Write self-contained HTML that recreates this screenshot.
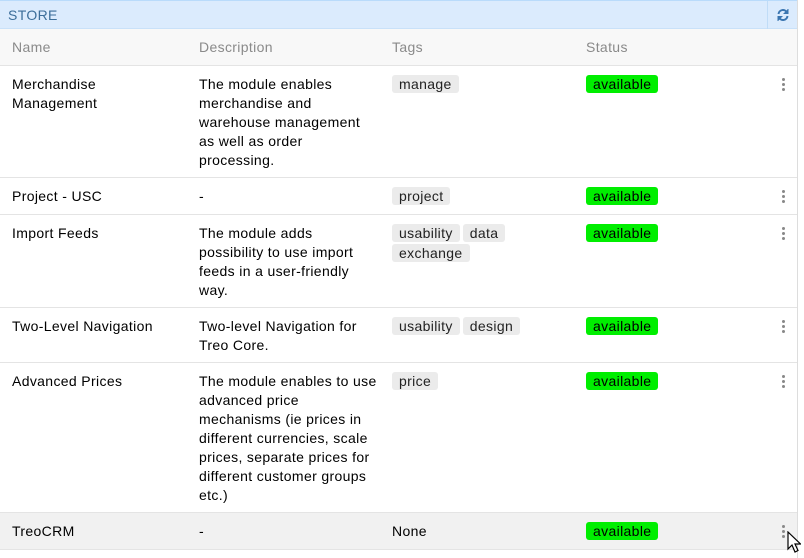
<!DOCTYPE html>
<html><head><meta charset="utf-8"><style>
*{margin:0;padding:0;box-sizing:border-box}
body{width:804px;height:558px;background:#fff;font-family:"Liberation Sans",sans-serif;font-size:14px;letter-spacing:0.35px;color:#000;position:relative;overflow:hidden}
.panel{position:absolute;left:0;top:0;width:798px;height:558px;border-right:1px solid #ddd}
.hdr{position:absolute;left:0;top:0;width:797px;height:29px;background:#dbebfd;border-top:1px solid #b9dbfb;border-bottom:1px solid #c9e1f9}
.hdr span{position:absolute;left:8px;top:6px;color:#3c6e9a;font-size:14px}
.rf{position:absolute;right:0;top:0;width:30px;height:28px;border-left:1px solid #c0dcf7;display:flex;align-items:center;justify-content:center}
.th{position:absolute;left:0;top:29px;width:797px;height:37px;background:#f8f8f8;border-bottom:1px solid #e4e4e4;color:#8a8a8a}
.th span,.row span{position:absolute}
.row{position:absolute;left:0;width:797px;border-bottom:1px solid #e4e4e4;line-height:19px}
.c1{left:12px;top:9px;width:150px}.c2{left:199px;top:9px;width:178px}.c3{left:392px;top:9px;width:180px}.c4{left:586px;top:9px}
.tag{display:inline-block;background:#ebebeb;border-radius:3px;padding:0 7px;line-height:18px;margin:0 3px 2px 0;color:#222;font-weight:normal}
.av{background:#00ee00;border-radius:3px;padding:0 7px;line-height:18px;display:inline-block;font-weight:normal}
.dots{position:absolute;left:782px;top:12px;width:3px}
.dots i{display:block;width:3px;height:3px;border-radius:50%;background:#888;margin-bottom:2px}
</style></head><body>
<div class="panel">
<div class="hdr"><span>STORE</span><div class="rf"><svg width="14" height="14" viewBox="0 0 14 14" fill="none" stroke="#3a75b0" stroke-width="2"><path d="M2.5 6A4.5 4.5 0 0 1 11 4.5"/><path d="M11.5 8A4.5 4.5 0 0 1 3 9.5"/><path d="M12 1v4.5H7.5" fill="#3a75b0" stroke-width="1"/><path d="M2 13V8.5h4.5" fill="#3a75b0" stroke-width="1"/></svg></div></div>
<div class="th"><span style="left:12px;top:10px">Name</span><span style="left:199px;top:10px">Description</span><span style="left:392px;top:10px">Tags</span><span style="left:586px;top:10px">Status</span></div>

<div class="row" style="top:66px;height:112px"><span class="c1">Merchandise Management</span><span class="c2">The module enables merchandise and warehouse management as well as order processing.</span><span class="c3"><b class="tag">manage</b></span><span class="c4"><b class="av">available</b></span><div class="dots"><i></i><i></i><i></i></div></div>

<div class="row" style="top:178px;height:37px"><span class="c1">Project - USC</span><span class="c2">-</span><span class="c3"><b class="tag">project</b></span><span class="c4"><b class="av">available</b></span><div class="dots"><i></i><i></i><i></i></div></div>

<div class="row" style="top:215px;height:93px"><span class="c1">Import Feeds</span><span class="c2" style="width:160px">The module adds possibility to use import feeds in a user-friendly way.</span><span class="c3" style="width:130px"><b class="tag">usability</b><b class="tag">data</b><b class="tag">exchange</b></span><span class="c4"><b class="av">available</b></span><div class="dots"><i></i><i></i><i></i></div></div>

<div class="row" style="top:308px;height:55px"><span class="c1">Two-Level Navigation</span><span class="c2">Two-level Navigation for Treo Core.</span><span class="c3"><b class="tag">usability</b><b class="tag">design</b></span><span class="c4"><b class="av">available</b></span><div class="dots"><i></i><i></i><i></i></div></div>

<div class="row" style="top:363px;height:150px"><span class="c1">Advanced Prices</span><span class="c2" style="width:190px;white-space:nowrap">The module enables to use<br>advanced price<br>mechanisms (ie prices in<br>different currencies, scale<br>prices, separate prices for<br>different customer groups<br>etc.)</span><span class="c3"><b class="tag">price</b></span><span class="c4"><b class="av">available</b></span><div class="dots"><i></i><i></i><i></i></div></div>

<div class="row" style="top:513px;height:37px;background:#f1f1f1"><span class="c1">TreoCRM</span><span class="c2">-</span><span class="c3">None</span><span class="c4"><b class="av">available</b></span><div class="dots"><i></i><i></i><i></i></div></div>
</div>
<svg style="position:absolute;left:787px;top:531px" width="14" height="22" viewBox="0 0 14 22"><path d="M1 1v17l4-4 3 7 3-1.5-3-6.5h5.5z" fill="#fff" stroke="#000" stroke-width="1.2"/></svg>
</body></html>
